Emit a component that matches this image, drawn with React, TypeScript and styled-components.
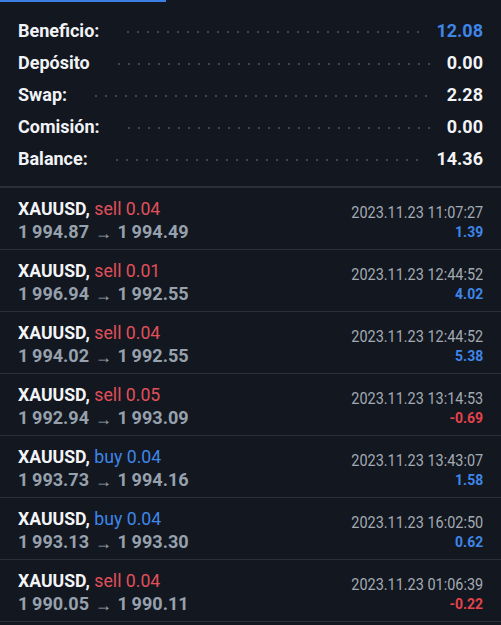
import styled, { createGlobalStyle } from "styled-components";

const GlobalStyle = createGlobalStyle`
  html, body {
    margin: 0;
    padding: 0;
    background: #121720;
  }
  body {
    font-family: Roboto, "Noto Sans", sans-serif;
    color: #eef0f3;
  }
`;

type Summary = { label: string; value: string; blue?: boolean };
type Deal = {
  side: "sell" | "buy";
  volume: string;
  open: string;
  close: string;
  time: string;
  profit: string;
};

const summary: Summary[] = [
  { label: "Beneficio:", value: "12.08", blue: true },
  { label: "Depósito", value: "0.00" },
  { label: "Swap:", value: "2.28" },
  { label: "Comisión:", value: "0.00" },
  { label: "Balance:", value: "14.36" },
];

const deals: Deal[] = [
  { side: "sell", volume: "0.04", open: "1 994.87", close: "1 994.49", time: "2023.11.23 11:07:27", profit: "1.39" },
  { side: "sell", volume: "0.01", open: "1 996.94", close: "1 992.55", time: "2023.11.23 12:44:52", profit: "4.02" },
  { side: "sell", volume: "0.04", open: "1 994.02", close: "1 992.55", time: "2023.11.23 12:44:52", profit: "5.38" },
  { side: "sell", volume: "0.05", open: "1 992.94", close: "1 993.09", time: "2023.11.23 13:14:53", profit: "-0.69" },
  { side: "buy", volume: "0.04", open: "1 993.73", close: "1 994.16", time: "2023.11.23 13:43:07", profit: "1.58" },
  { side: "buy", volume: "0.04", open: "1 993.13", close: "1 993.30", time: "2023.11.23 16:02:50", profit: "0.62" },
  { side: "sell", volume: "0.04", open: "1 990.05", close: "1 990.11", time: "2023.11.23 01:06:39", profit: "-0.22" },
];

// prices use a narrow space between thousands, as the terminal does
const thin = (s: string) => s.replace(" ", "\u2009");

export default function App() {
  return (
    <Screen>
      <GlobalStyle />
      <TabIndicator />
      <SummaryBlock>
        {summary.map((s) => (
          <SummaryRow key={s.label}>
            <SummaryLabel>{s.label}</SummaryLabel>
            <Leader />
            <SummaryValue $blue={s.blue}>{s.value}</SummaryValue>
          </SummaryRow>
        ))}
      </SummaryBlock>
      <DealList>
        {deals.map((d, i) => (
          <DealRow key={i}>
            <DealLeft>
              <DealTitle>
                <Symbol>XAUUSD,</Symbol> <Side $side={d.side}>{d.side} {d.volume}</Side>
              </DealTitle>
              <Prices>
                <span>{thin(d.open)}</span>
                <Arrow>→</Arrow>
                <span>{thin(d.close)}</span>
              </Prices>
            </DealLeft>
            <DealRight>
              <Time>{d.time}</Time>
              <Profit $negative={d.profit.startsWith("-")}>{d.profit}</Profit>
            </DealRight>
          </DealRow>
        ))}
      </DealList>
    </Screen>
  );
}

const Screen = styled.div`
  width: 501px;
  min-height: 625px;
  background: #121720;
  overflow: hidden;
`;

const TabIndicator = styled.div`
  width: 166px;
  height: 2px;
  background: #3b7fe3;
`;

const SummaryBlock = styled.div`
  padding: 12px 18px 12px;
  border-bottom: 2px solid #2a3039;
`;

const SummaryRow = styled.div`
  display: flex;
  align-items: center;
  height: 32px;
`;

const SummaryLabel = styled.span`
  font-size: 18px;
  font-weight: 700;
  color: #f1f3f6;
`;

const Leader = styled.span`
  flex: 1;
  height: 2px;
  margin: 3px 13px 0 24px;
  background-image: radial-gradient(circle, #404651 0.9px, transparent 1.2px);
  background-size: 10px 2px;
  background-repeat: repeat-x;
`;

const SummaryValue = styled.span<{ $blue?: boolean }>`
  font-size: 18px;
  font-weight: 700;
  color: ${(p) => (p.$blue ? "#3f86e8" : "#f1f3f6")};
`;

const DealList = styled.div`
  display: flex;
  flex-direction: column;
`;

const DealRow = styled.div`
  display: flex;
  justify-content: space-between;
  height: 62px;
  padding: 10px 18px 0;
  box-sizing: border-box;
  border-bottom: 1px solid #2a3039;
`;

const DealLeft = styled.div`
  display: flex;
  flex-direction: column;
  align-items: flex-start;
`;

const DealRight = styled.div`
  display: flex;
  flex-direction: column;
  align-items: flex-end;
  padding-top: 4px;
`;

const DealTitle = styled.div`
  font-size: 19px;
  line-height: 22px;
  white-space: nowrap;
  transform: scaleX(0.93);
  transform-origin: left center;
`;

const Symbol = styled.span`
  font-weight: 700;
  color: #f3f4f6;
`;

const Side = styled.span<{ $side: "sell" | "buy" }>`
  color: ${(p) => (p.$side === "sell" ? "#e0505a" : "#3f86e8")};
`;

const Prices = styled.div`
  display: flex;
  align-items: center;
  gap: 6px;
  font-size: 19px;
  line-height: 22px;
  font-weight: 700;
  color: #97a1ad;
  white-space: nowrap;
  transform: scaleX(0.95);
  transform-origin: left center;
`;

const Arrow = styled.span`
  font-size: 18px;
  font-weight: 400;
  margin-top: 2px;
`;

const Time = styled.div`
  font-size: 17px;
  line-height: 20px;
  color: #a4aab2;
  white-space: nowrap;
  transform: scaleX(0.85);
  transform-origin: right center;
`;

const Profit = styled.div<{ $negative: boolean }>`
  font-size: 15px;
  line-height: 20px;
  font-weight: 700;
  color: ${(p) => (p.$negative ? "#e5434c" : "#3f86e8")};
  transform: scaleX(0.93);
  transform-origin: right center;
`;
